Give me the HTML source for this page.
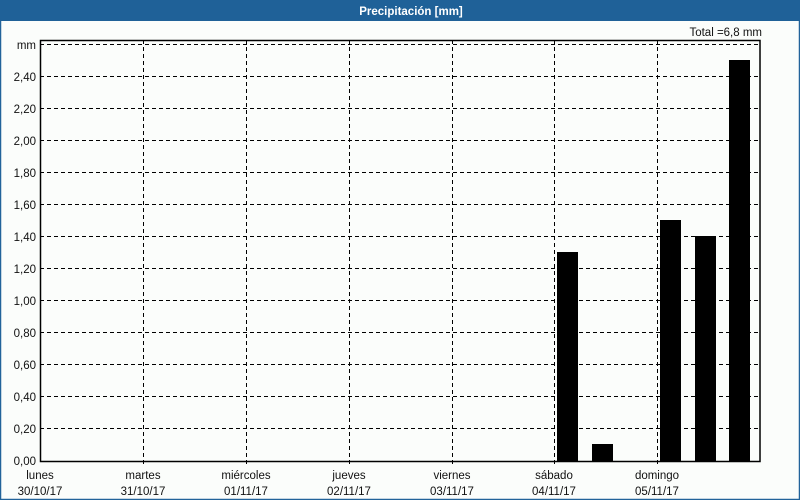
<!DOCTYPE html>
<html><head><meta charset="utf-8"><style>
html,body{margin:0;padding:0;width:800px;height:500px;overflow:hidden;background:#fbfdfb}
svg{display:block}
text{font-family:"Liberation Sans",sans-serif;font-size:11.5px;fill:#111}
</style></head><body>
<svg width="800" height="500" xmlns="http://www.w3.org/2000/svg">
<rect x="0" y="0" width="800" height="500" fill="#fbfdfb"/>
<rect x="0.5" y="0.5" width="799" height="499" fill="none" stroke="#22639a" stroke-width="1.5"/>
<rect x="0" y="0" width="800" height="21" fill="#1f6198"/>
<text x="411" y="15" text-anchor="middle" style="font-weight:bold;fill:#fff;font-size:11.5px">Precipitación [mm]</text>
<text x="762" y="36" text-anchor="end">Total =6,8 mm</text>
<g stroke="#000" stroke-width="1" stroke-dasharray="4,3" fill="none">
<line x1="40" y1="44.5" x2="760" y2="44.5"/>
<line x1="40" y1="76.5" x2="760" y2="76.5"/>
<line x1="40" y1="108.5" x2="760" y2="108.5"/>
<line x1="40" y1="140.5" x2="760" y2="140.5"/>
<line x1="40" y1="172.5" x2="760" y2="172.5"/>
<line x1="40" y1="204.5" x2="760" y2="204.5"/>
<line x1="40" y1="236.5" x2="760" y2="236.5"/>
<line x1="40" y1="268.5" x2="760" y2="268.5"/>
<line x1="40" y1="300.5" x2="760" y2="300.5"/>
<line x1="40" y1="332.5" x2="760" y2="332.5"/>
<line x1="40" y1="364.5" x2="760" y2="364.5"/>
<line x1="40" y1="396.5" x2="760" y2="396.5"/>
<line x1="40" y1="428.5" x2="760" y2="428.5"/>
<line x1="143.5" y1="40" x2="143.5" y2="464"/>
<line x1="246.5" y1="40" x2="246.5" y2="464"/>
<line x1="349.5" y1="40" x2="349.5" y2="464"/>
<line x1="452.5" y1="40" x2="452.5" y2="464"/>
<line x1="554.5" y1="40" x2="554.5" y2="464"/>
<line x1="657.5" y1="40" x2="657.5" y2="464"/>
</g>
<g fill="#000">
<rect x="557" y="252" width="21" height="209"/>
<rect x="592" y="444" width="21" height="17"/>
<rect x="660" y="220" width="21" height="241"/>
<rect x="695" y="236" width="21" height="225"/>
<rect x="729" y="60" width="21" height="401"/>
</g>
<rect x="40.5" y="40.5" width="719.5" height="421" fill="none" stroke="#000" stroke-width="1.5"/>
<g text-anchor="end">
<text x="36" y="49">mm</text>
<text x="36" y="81">2,40</text>
<text x="36" y="113">2,20</text>
<text x="36" y="145">2,00</text>
<text x="36" y="177">1,80</text>
<text x="36" y="209">1,60</text>
<text x="36" y="241">1,40</text>
<text x="36" y="273">1,20</text>
<text x="36" y="305">1,00</text>
<text x="36" y="337">0,80</text>
<text x="36" y="369">0,60</text>
<text x="36" y="401">0,40</text>
<text x="36" y="433">0,20</text>
<text x="36" y="465">0,00</text>
</g>
<g text-anchor="middle">
<text x="40" y="479">lunes</text><text x="40" y="495">30/10/17</text>
<text x="143" y="479">martes</text><text x="143" y="495">31/10/17</text>
<text x="246" y="479">miércoles</text><text x="246" y="495">01/11/17</text>
<text x="349" y="479">jueves</text><text x="349" y="495">02/11/17</text>
<text x="452" y="479">viernes</text><text x="452" y="495">03/11/17</text>
<text x="554" y="479">sábado</text><text x="554" y="495">04/11/17</text>
<text x="657" y="479">domingo</text><text x="657" y="495">05/11/17</text>
</g>
</svg>
</body></html>
